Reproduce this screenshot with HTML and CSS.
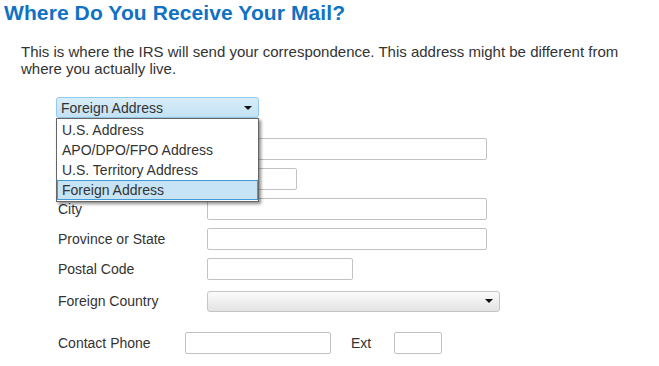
FILE: index.html
```html
<!DOCTYPE html>
<html lang="en">
<head>
<meta charset="utf-8">
<title>Where Do You Receive Your Mail?</title>
<link rel="stylesheet" href="styles.css">
</head>
<body>
<h1 class="title">Where Do You Receive Your Mail?</h1>
<p class="intro">This is where the IRS will send your correspondence. This address might be different from where you actually live.</p>
<div class="form">
  <div class="type-row">
    <div class="type-select">
      <div class="select select-blue"><span class="select-text">Foreign Address</span><span class="caret"></span></div>
      <ul class="options">
        <li class="option">U.S. Address</li>
        <li class="option">APO/DPO/FPO Address</li>
        <li class="option">U.S. Territory Address</li>
        <li class="option option-active">Foreign Address</li>
      </ul>
    </div>
  </div>
  <div class="fields">
    <span class="label"></span>
    <div class="input input-wide"></div>
    <span class="label"></span>
    <div class="input input-small"></div>
    <label class="label">City</label>
    <div class="input input-wide"></div>
    <label class="label">Province or State</label>
    <div class="input input-wide"></div>
    <label class="label">Postal Code</label>
    <div class="input input-medium"></div>
    <label class="label label-country">Foreign Country</label>
    <div class="select select-gray country"><span class="select-text"></span><span class="caret"></span></div>
  </div>
  <div class="phone-row">
    <label class="label phone-label">Contact Phone</label>
    <div class="input input-medium"></div>
    <label class="label ext-label">Ext</label>
    <div class="input input-ext"></div>
  </div>
</div>
</body>
</html>
```
FILE: styles.css
```css
* { box-sizing: border-box; }
body {
  margin: 0;
  background: #ffffff;
  font-family: "Liberation Sans", Arial, sans-serif;
  color: #333333;
}
.title {
  margin: 0;
  padding: 1px 0 0 4px;
  font-size: 21px;
  line-height: 24px;
  font-weight: bold;
  color: #0f72c4;
  letter-spacing: 0.1px;
}
.intro {
  margin: 18px 0 0 0;
  padding: 0 23px 0 21px;
  font-size: 15px;
  line-height: 17px;
}
.form {
  margin-top: 20px;
}
.type-row {
  padding-left: 56px;
  height: 21px;
}
.type-select {
  position: relative;
  width: 203px;
  height: 21px;
}
.select {
  display: flex;
  align-items: center;
  justify-content: space-between;
  height: 21px;
  padding: 0 6px 0 4px;
  border-radius: 3px;
  font-size: 14px;
}
.select-blue {
  background: linear-gradient(#d8edf9, #c3e2f4);
  border: 1px solid #93c9ea;
}
.select-gray {
  background: linear-gradient(#fbfbfb, #e3e3e3);
  border: 1px solid #c4c4c4;
}
.caret {
  width: 0;
  height: 0;
  border-left: 4px solid transparent;
  border-right: 4px solid transparent;
  border-top: 4px solid #111111;
}
.options {
  position: absolute;
  top: 21px;
  left: 0;
  width: 203px;
  margin: 0;
  padding: 1px 0;
  list-style: none;
  background: #ffffff;
  border: 1px solid #666666;
  box-shadow: 2px 2px 3px rgba(0, 0, 0, 0.45);
  z-index: 2;
}
.option {
  height: 20px;
  line-height: 20px;
  padding-left: 5px;
  font-size: 14px;
  color: #333333;
}
.option-active {
  background: #c6e4f5;
  outline: 1px solid #3f9bd8;
  outline-offset: -1px;
}
.fields {
  margin-top: 20px;
  padding-left: 58px;
  display: grid;
  grid-template-columns: 149px auto;
  grid-auto-rows: 22px;
  row-gap: 8px;
  justify-items: start;
  align-items: center;
}
.label {
  font-size: 14px;
  color: #333333;
}
.input {
  height: 22px;
  border: 1px solid #c2c2c2;
  border-radius: 2px;
  background: #ffffff;
}
.input-wide { width: 280px; }
.input-small { width: 90px; }
.input-medium { width: 146px; }
.input-ext { width: 48px; }
.country {
  width: 293px;
  margin-top: 4px;
}
.label-country { margin-top: 4px; }
.phone-row {
  margin-top: 22px;
  padding-left: 58px;
  display: flex;
  align-items: center;
}
.phone-label { width: 127px; }
.ext-label {
  width: 43px;
  margin-left: 20px;
}
```
